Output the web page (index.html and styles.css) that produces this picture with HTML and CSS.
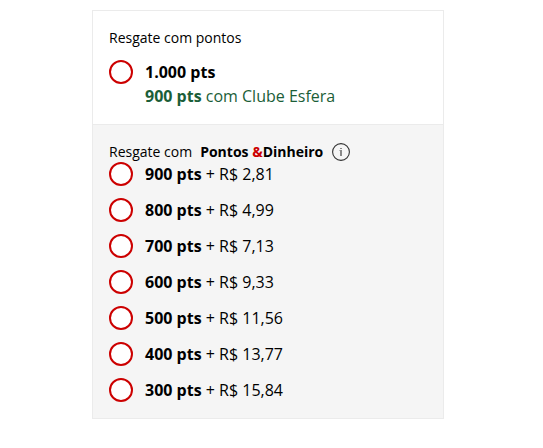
FILE: index.html
```html
<!DOCTYPE html>
<html lang="pt-BR">
<head>
  <meta charset="UTF-8" />
  <meta name="viewport" content="width=device-width, initial-scale=1.0" />
  <title>Resgate</title>
  <link rel="stylesheet" href="styles.css">
</head>
<body>
  <form class="redeem">
    <section class="redeem-section">
      <h2 class="redeem-title title-points">Resgate com pontos</h2>
      <label class="option">
        <input type="radio" name="redeem" value="1000">
        <span class="option-text">
          <b>1.000 pts</b>
          <span class="club"><b>900 pts</b> com Clube Esfera</span>
        </span>
      </label>
    </section>

    <section class="redeem-section section-mixed">
      <h2 class="redeem-title">
        <span>Resgate com</span>
        <b>Pontos <span class="amp">&amp;</span>Dinheiro</b>
        <button type="button" class="info" aria-label="Mais informações">
          <svg width="20" height="20" viewBox="0 0 20 20" fill="none">
            <circle cx="10" cy="10" r="8.4" stroke="#333" stroke-width="1.1" />
            <rect x="9" y="6" width="2" height="1" fill="#888" />
            <rect x="9" y="8" width="2" height="6" fill="#888" />
            <rect x="8" y="8" width="1" height="1" fill="#bbb" />
          </svg>
        </button>
      </h2>
      <div class="options">
        <label class="option">
          <input type="radio" name="redeem" value="900">
          <span><b>900 pts</b> + R$ 2,81</span>
        </label>
        <label class="option">
          <input type="radio" name="redeem" value="800">
          <span><b>800 pts</b> + R$ 4,99</span>
        </label>
        <label class="option">
          <input type="radio" name="redeem" value="700">
          <span><b>700 pts</b> + R$ 7,13</span>
        </label>
        <label class="option">
          <input type="radio" name="redeem" value="600">
          <span><b>600 pts</b> + R$ 9,33</span>
        </label>
        <label class="option">
          <input type="radio" name="redeem" value="500">
          <span><b>500 pts</b> + R$ 11,56</span>
        </label>
        <label class="option">
          <input type="radio" name="redeem" value="400">
          <span><b>400 pts</b> + R$ 13,77</span>
        </label>
        <label class="option">
          <input type="radio" name="redeem" value="300">
          <span><b>300 pts</b> + R$ 15,84</span>
        </label>
      </div>
    </section>
  </form>
</body>
</html>
```

FILE: styles.css
```css
* {
  box-sizing: border-box;
}
body {
  margin: 0;
  padding: 10px 99px 10px 92px;
  background-color: #fff;
  color: #000;
  font-family: "Open Sans", sans-serif;
  font-size: 16px;
  line-height: 24px;
}
b {
  font-weight: 700;
}
.redeem {
  border: 1px solid #ebebeb;
}
.redeem-section {
  padding: 16px;
}
.section-mixed {
  border-top: 1px solid #ebebeb;
  background-color: #f5f5f5;
}
.redeem-title {
  display: flex;
  align-items: center;
  gap: 8px;
  height: 21px;
  margin: 0;
  font-size: 14px;
  font-weight: 400;
  line-height: 21px;
}
.title-points {
  margin-bottom: 12px;
}
.amp {
  color: #c00;
}
.info {
  display: flex;
  padding: 0;
  border: 0;
  background: none;
  cursor: pointer;
}

/* Radio options */
.options {
  display: flex;
  flex-direction: column;
  gap: 12px;
}
.option {
  display: flex;
  align-items: flex-start;
  gap: 12px;
  cursor: pointer;
}
.option input {
  appearance: none;
  flex: none;
  width: 24px;
  height: 24px;
  margin: 0;
  border: 2px solid #c00;
  border-radius: 50%;
  background-color: #fff;
}
.option input:checked {
  background-color: #c00;
  box-shadow: inset 0 0 0 4px #fff;
}
.option-text {
  display: flex;
  flex-direction: column;
}
.club {
  color: #1b5e38;
}
```
